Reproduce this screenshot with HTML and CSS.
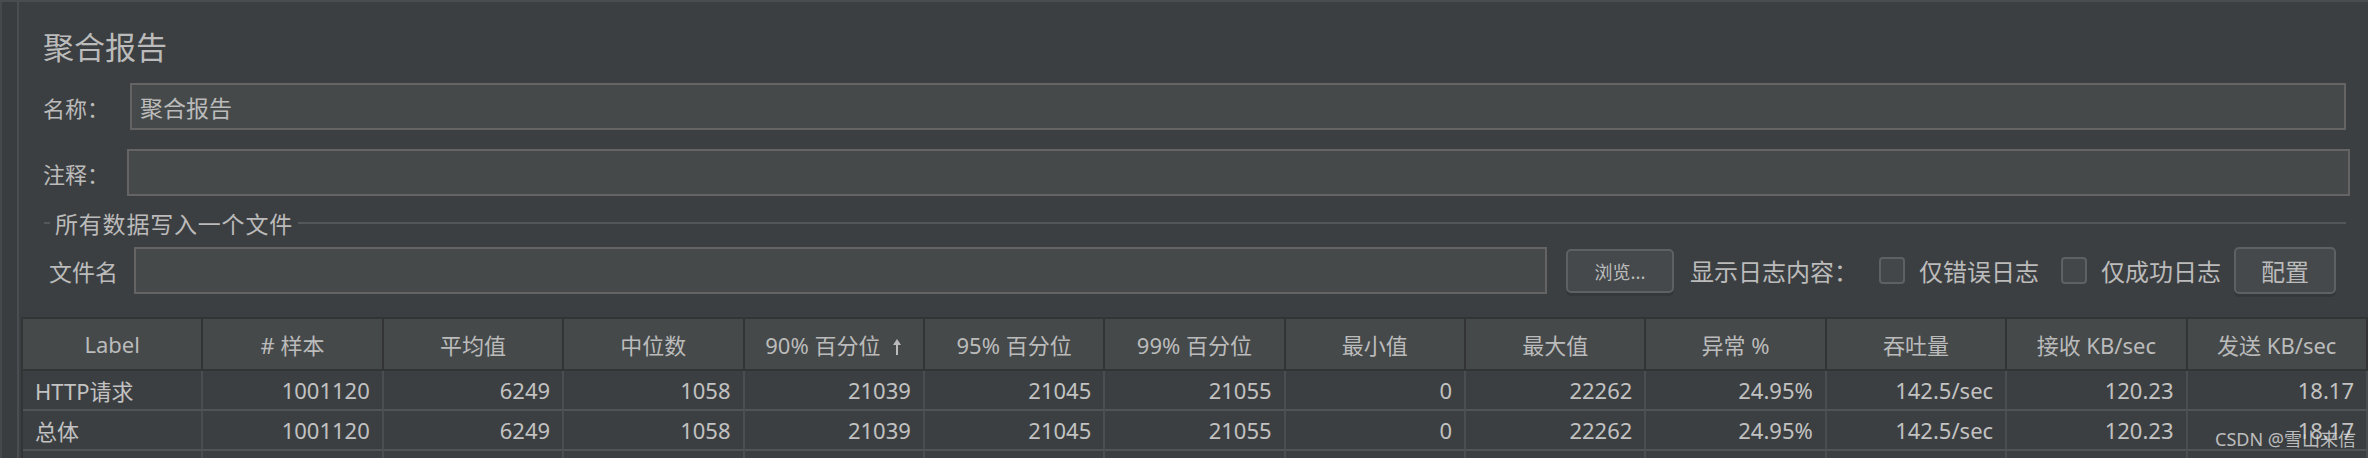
FILE: index.html
```html
<!DOCTYPE html>
<html lang="zh-CN">
<head>
  <meta charset="UTF-8" />
  <meta name="viewport" content="width=device-width, initial-scale=1.0"/>
  <title>聚合报告</title>
  <link rel="stylesheet" href="styles.css">
</head>
<body>

  <div class="frame">
    <div class="gutter"></div>

    <div class="panel">
      <h1 class="title">聚合报告</h1>

      <div class="field field-name">
        <span class="field-label">名称：</span>
        <div class="field-input">聚合报告</div>
      </div>

      <div class="field field-comment">
        <span class="field-label">注释：</span>
        <div class="field-input"></div>
      </div>

      <div class="group-title"><span>所有数据写入一个文件</span></div>

      <div class="file-row">
        <span class="file-label">文件名</span>
        <div class="field-input file-input"></div>
        <button class="btn btn-browse">浏览...</button>
        <span class="log-label">显示日志内容：</span>
        <span class="check"></span>
        <span class="check-text">仅错误日志</span>
        <span class="check"></span>
        <span class="check-text">仅成功日志</span>
        <button class="btn btn-config">配置</button>
      </div>

      <table class="report">
        <thead>
          <tr>
            <th>Label</th>
            <th># 样本</th>
            <th>平均值</th>
            <th>中位数</th>
            <th>90% 百分位 <svg class="sort-arrow" width="10" height="16" viewBox="0 0 10 16"><polygon points="1,6 5,0 9,6" fill="#bbbbbb"/><line x1="5" y1="4" x2="5" y2="16" stroke="#bbbbbb" stroke-width="2"/></svg></th>
            <th>95% 百分位</th>
            <th>99% 百分位</th>
            <th>最小值</th>
            <th>最大值</th>
            <th>异常 %</th>
            <th>吞吐量</th>
            <th>接收 KB/sec</th>
            <th>发送 KB/sec</th>
          </tr>
        </thead>
        <tbody>
          <tr>
            <td>HTTP请求</td>
            <td>1001120</td>
            <td>6249</td>
            <td>1058</td>
            <td>21039</td>
            <td>21045</td>
            <td>21055</td>
            <td>0</td>
            <td>22262</td>
            <td>24.95%</td>
            <td>142.5/sec</td>
            <td>120.23</td>
            <td>18.17</td>
          </tr>
          <tr>
            <td>总体</td>
            <td>1001120</td>
            <td>6249</td>
            <td>1058</td>
            <td>21039</td>
            <td>21045</td>
            <td>21055</td>
            <td>0</td>
            <td>22262</td>
            <td>24.95%</td>
            <td>142.5/sec</td>
            <td>120.23</td>
            <td>18.17</td>
          </tr>
          <tr>
            <td></td><td></td><td></td><td></td><td></td><td></td><td></td>
            <td></td><td></td><td></td><td></td><td></td><td></td>
          </tr>
        </tbody>
      </table>

      <div class="watermark">CSDN @雪山来信</div>
    </div>
  </div>

</body>
</html>
```

FILE: styles.css
```css
body {
  margin: 0;
  width: 2368px;
  height: 458px;
  overflow: hidden;
  background-color: #3c3f41;
  color: #bbbbbb;
  font-family: "Noto Sans", "Noto Sans CJK SC", sans-serif;
}

.frame {
  display: flex;
  height: 458px;
  overflow: hidden;
  box-sizing: border-box;
  border-top: 2px solid #4a4d4f;
}

.gutter {
  width: 15px;
  background-color: #3a3d3f;
  border-left: 2px solid #46494b;
  border-right: 2px solid #4b4e50;
}

.panel {
  flex: 1;
  min-width: 0;
  position: relative;
  padding-top: 24px;
}

.title {
  margin: 0 0 0 24px;
  font-size: 31px;
  line-height: 40px;
  font-weight: normal;
  font-family: "Noto Sans CJK SC", sans-serif;
  color: #bbbbbb;
}

.field {
  display: flex;
  align-items: center;
  height: 47px;
  margin-left: 24px;
}

.field-name {
  margin-top: 17px;
  margin-right: 22px;
}

.field-comment {
  margin-top: 19px;
  margin-right: 18px;
}

.field-label {
  font-family: "Noto Sans CJK SC", sans-serif;
  font-size: 22px;
}

.field-name .field-label {
  width: 87px;
}

.field-comment .field-label {
  width: 84px;
}

.field-input {
  flex: 1;
  height: 47px;
  box-sizing: border-box;
  border: 2px solid #646464;
  background-color: #45494a;
  padding-left: 8px;
  display: flex;
  align-items: center;
  font-family: "Noto Sans CJK SC", sans-serif;
  font-size: 23px;
  color: #bbbbbb;
}

.group-title {
  display: flex;
  align-items: center;
  height: 24px;
  margin: 15px 22px 0 25px;
  font-family: "Noto Sans CJK SC", sans-serif;
  font-size: 23px;
  letter-spacing: 0.8px;
}

.group-title::before {
  content: "";
  width: 6px;
  height: 2px;
  background-color: #545759;
}

.group-title::after {
  content: "";
  flex: 1;
  height: 2px;
  background-color: #545759;
}

.group-title span {
  padding: 0 5px;
}

.file-row {
  display: flex;
  align-items: center;
  height: 47px;
  margin: 12px 0 0 30px;
  font-family: "Noto Sans CJK SC", sans-serif;
}

.file-label {
  width: 85px;
  font-size: 23px;
}

.file-input {
  flex: none;
  width: 1413px;
}

.btn {
  box-sizing: border-box;
  border: 2px solid #5e6163;
  border-radius: 5px;
  background-color: #45494b;
  color: #bbbbbb;
  font-family: "Noto Sans CJK SC", sans-serif;
  line-height: 1;
  box-shadow: 0 3px 0 #35383a;
  padding: 0;
}

.btn-browse {
  width: 108px;
  height: 44px;
  margin-left: 19px;
  font-size: 18px;
}

.log-label {
  margin-left: 16px;
  font-size: 24px;
}

.check {
  width: 26px;
  height: 27px;
  box-sizing: border-box;
  border: 2px solid #5d6163;
  border-radius: 4px;
  background-color: #43474a;
  margin-left: 21px;
}

.check-text {
  margin-left: 14px;
  font-size: 24px;
}

.check-text + .check {
  margin-left: 22px;
}

.btn-config {
  width: 102px;
  height: 47px;
  margin-left: 13px;
  font-size: 24px;
}

.report {
  margin: 23px 0 0 2px;
  width: 2347px;
  table-layout: fixed;
  border-collapse: separate;
  border-spacing: 0;
  border-left: 2px solid #323436;
  font-size: 22px;
}

.report th {
  height: 50px;
  padding: 0;
  font-weight: normal;
  text-align: center;
  background-color: #45494a;
  border-top: 2px solid #323436;
  border-bottom: 2px solid #323436;
  border-right: 2px solid #323436;
  color: #bbbbbb;
  white-space: nowrap;
}

.sort-arrow {
  margin-left: 6px;
  vertical-align: -1px;
}

.report td {
  height: 38px;
  padding: 0 12px;
  text-align: right;
  border-right: 2px solid #4a4e50;
  border-bottom: 2px solid #515456;
  color: #c2c2c2;
  white-space: nowrap;
}

.report td:first-child {
  text-align: left;
}

.watermark {
  position: absolute;
  left: 2196px;
  top: 427px;
  font-size: 18px;
  line-height: 20px;
  color: rgba(225, 225, 225, 0.78);
  white-space: nowrap;
}
```
